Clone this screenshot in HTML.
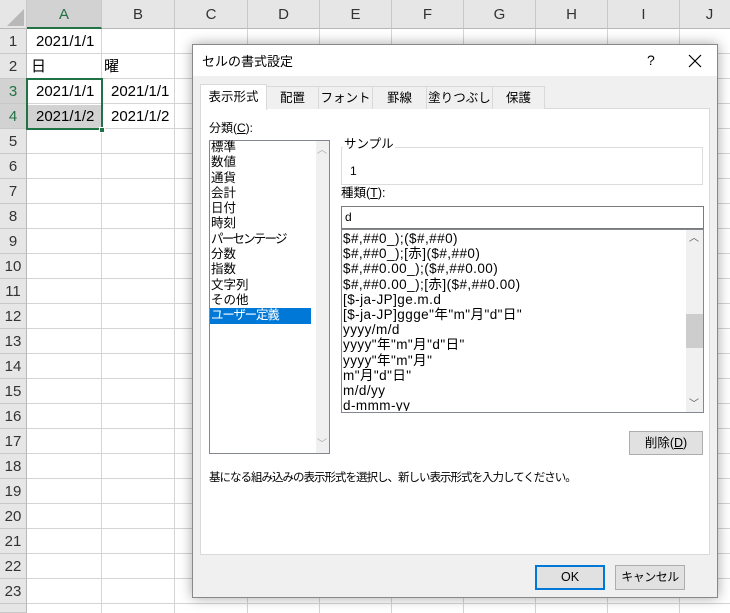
<!DOCTYPE html>
<html style="overflow:hidden;width:730px;height:613px"><head><meta charset="utf-8"><style>
*{margin:0;padding:0;box-sizing:border-box}
body{width:730px;height:613px;overflow:hidden;background:#fff;position:relative;font-family:"Liberation Sans","Noto Sans CJK JP",sans-serif;color:#000}
.a{position:absolute}
.grid{left:27px;top:29px;width:703px;height:584px;
background-image:repeating-linear-gradient(to bottom,transparent 0,transparent 24px,#d4d4d4 24px,#d4d4d4 25px);}
.vl{position:absolute;top:0;width:1px;height:613px;background:#d4d4d4}
.colh{top:0;height:29px;background:#e6e6e6;border-right:1px solid #c8c8c8;border-bottom:1px solid #b8b8b8;font-size:15px;text-align:center;line-height:29px;color:#333}
.rowh{left:0;width:27px;height:25px;background:#e6e6e6;border-bottom:1px solid #c8c8c8;border-right:1px solid #b8b8b8;font-size:15px;text-align:center;line-height:25px;color:#333}
.cell{font-size:15px;line-height:25px;height:25px}
.dlg{left:192px;top:44px;width:526px;height:554px;background:#f0f0f0;border:1px solid #888;box-shadow:0 0 12px rgba(0,0,0,.35);overflow:hidden}
.t{font-size:12px;line-height:15px;white-space:nowrap}
.tab{top:41px;height:23px;border:1px solid #d9d9d9;border-bottom:none;background:#f0f0f0;font-size:12.5px;text-align:center;line-height:22px}
.btn{background:#e1e1e1;border:1px solid #adadad;font-size:12px;text-align:center}
</style></head><body>
<div class="a grid"></div>
<div class="vl" style="left:101px"></div><div class="vl" style="left:174px"></div><div class="vl" style="left:247px"></div><div class="vl" style="left:319px"></div><div class="vl" style="left:391px"></div><div class="vl" style="left:463px"></div><div class="vl" style="left:535px"></div><div class="vl" style="left:607px"></div><div class="vl" style="left:679px"></div>
<div class="a colh" style="left:0;width:27px"><svg width="27" height="29" class="a" style="left:0;top:0"><polygon points="24,9 24,26 7,26" fill="#b8b8b8"/></svg></div>
<div class="a colh" style="left:27px;width:75px;background:#d2d2d2;border-bottom:2px solid #217346;color:#217346">A</div>
<div class="a colh" style="left:102px;width:73px">B</div>
<div class="a colh" style="left:175px;width:73px">C</div>
<div class="a colh" style="left:248px;width:72px">D</div>
<div class="a colh" style="left:320px;width:72px">E</div>
<div class="a colh" style="left:392px;width:72px">F</div>
<div class="a colh" style="left:464px;width:72px">G</div>
<div class="a colh" style="left:536px;width:72px">H</div>
<div class="a colh" style="left:608px;width:72px">I</div>
<div class="a colh" style="left:680px;width:60px">J</div>
<div class="a rowh" style="top:29px">1</div><div class="a rowh" style="top:54px">2</div>
<div class="a rowh" style="top:79px;background:#d2d2d2;color:#217346">3</div><div class="a rowh" style="top:104px;background:#d2d2d2;color:#217346">4</div>
<div class="a rowh" style="top:129px">5</div><div class="a rowh" style="top:154px">6</div><div class="a rowh" style="top:179px">7</div><div class="a rowh" style="top:204px">8</div><div class="a rowh" style="top:229px">9</div><div class="a rowh" style="top:254px">10</div><div class="a rowh" style="top:279px">11</div><div class="a rowh" style="top:304px">12</div><div class="a rowh" style="top:329px">13</div><div class="a rowh" style="top:354px">14</div><div class="a rowh" style="top:379px">15</div><div class="a rowh" style="top:404px">16</div><div class="a rowh" style="top:429px">17</div><div class="a rowh" style="top:454px">18</div><div class="a rowh" style="top:479px">19</div><div class="a rowh" style="top:504px">20</div><div class="a rowh" style="top:529px">21</div><div class="a rowh" style="top:554px">22</div><div class="a rowh" style="top:579px">23</div><div class="a rowh" style="top:604px;height:9px"></div>
<div class="a" style="left:28px;top:105px;width:73px;height:23px;background:#d2d2d2"></div>
<div class="a cell" style="left:36px;top:29px">2021/1/1</div>
<div class="a cell" style="left:31px;top:54px">日</div>
<div class="a cell" style="left:104px;top:54px">曜</div>
<div class="a cell" style="left:36px;top:79px">2021/1/1</div>
<div class="a cell" style="left:111px;top:79px">2021/1/1</div>
<div class="a cell" style="left:36px;top:104px">2021/1/2</div>
<div class="a cell" style="left:111px;top:104px">2021/1/2</div>
<div class="a" style="left:26px;top:78px;width:77px;height:52px;border:2px solid #217346"></div>
<div class="a" style="left:99px;top:127px;width:6px;height:6px;background:#217346;border:1px solid #fff"></div>

<div class="a dlg">
<div class="a" style="left:0;top:0;width:524px;height:31px;background:#fff"></div>
<div class="a t" style="left:9px;top:9px;font-size:13px">セルの書式設定</div>
<div class="a t" style="left:454px;top:8px;font-size:14px">?</div>
<svg class="a" style="left:495px;top:9px" width="14" height="14"><path d="M1 1L13 13M13 1L1 13" stroke="#000" stroke-width="1.2"/></svg>
<div class="a" style="left:7px;top:63px;width:510px;height:447px;background:#fff;border:1px solid #d9d9d9"></div>
<div class="a tab" style="left:73px;width:53px">配置</div>
<div class="a tab" style="left:125px;width:55px">フォント</div>
<div class="a tab" style="left:179px;width:55px">罫線</div>
<div class="a tab" style="left:233px;width:67px">塗りつぶし</div>
<div class="a tab" style="left:299px;width:53px">保護</div>
<div class="a tab" style="left:7px;top:39px;width:67px;height:26px;background:#fff;line-height:24px">表示形式</div>
<div class="a t" style="left:16px;top:76px">分類(<u>C</u>):</div>
<div class="a" style="left:16px;top:95px;width:121px;height:314px;background:#fff;border:1px solid #828790"></div>
<div class="a" style="left:123px;top:96px;width:13px;height:312px;background:#f0f0f0"></div>
<div class="a t" style="left:124px;top:98px;color:#aaa;font-size:10px">︿</div>
<div class="a t" style="left:124px;top:392px;color:#aaa;font-size:10px">﹀</div>
<div class="a t" style="left:18px;top:95px;line-height:15.3px;font-size:12.5px">標準<br>数値<br>通貨<br>会計<br>日付<br>時刻<br><span style="letter-spacing:-1.8px">パーセンテージ</span><br>分数<br>指数<br>文字列<br>その他<br><span style="background:#0078d7;color:#fff;display:inline-block;width:101px;margin-left:-1px;padding-left:1px;letter-spacing:-1.2px">ユーザー定義</span></div>
<div class="a" style="left:148px;top:102px;width:362px;height:38px;border:1px solid #dcdcdc"></div>
<div class="a t" style="left:150px;top:92px;background:#fff;padding:0 1px;font-size:12.5px">サンプル</div>
<div class="a t" style="left:157px;top:119px">1</div>
<div class="a t" style="left:148px;top:141px;font-size:12.5px">種類(<u>T</u>):</div>
<div class="a" style="left:148px;top:161px;width:363px;height:23px;background:#fff;border:1px solid #7a7a7a"></div>
<div class="a t" style="left:152px;top:165px">d</div>
<div class="a" style="left:148px;top:184px;width:363px;height:184px;background:#fff;border:1px solid #828790"></div>
<div class="a" style="left:493px;top:185px;width:17px;height:182px;background:#f0f0f0"></div>
<div class="a" style="left:493px;top:269px;width:17px;height:34px;background:#cdcdcd"></div>
<div class="a t" style="left:496px;top:186px;font-size:10px;color:#555">︿</div>
<div class="a t" style="left:496px;top:352px;font-size:10px;color:#555">﹀</div>
<div class="a t" style="left:150px;top:186px;font-size:13.5px;letter-spacing:0.45px;line-height:15.2px;overflow:hidden;height:180px">$#,##0_);($#,##0)<br>$#,##0_);[赤]($#,##0)<br>$#,##0.00_);($#,##0.00)<br>$#,##0.00_);[赤]($#,##0.00)<br>[$-ja-JP]ge.m.d<br>[$-ja-JP]ggge"年"m"月"d"日"<br>yyyy/m/d<br>yyyy"年"m"月"d"日"<br>yyyy"年"m"月"<br>m"月"d"日"<br>m/d/yy<br>d-mmm-yy</div>
<div class="a btn" style="left:436px;top:386px;width:74px;height:24px;line-height:22px;font-size:12.5px">削除(<u>D</u>)</div>
<div class="a t" style="left:16px;top:426px;font-size:11.5px;letter-spacing:-1px">基になる組み込みの表示形式を選択し、新しい表示形式を入力してください。</div>
<div class="a btn" style="left:342px;top:520px;width:70px;height:25px;line-height:21px;border:2px solid #0078d7;font-size:12.5px">OK</div>
<div class="a btn" style="left:422px;top:520px;width:70px;height:25px;line-height:23px;letter-spacing:-0.5px">キャンセル</div>
</div>
</body></html>
